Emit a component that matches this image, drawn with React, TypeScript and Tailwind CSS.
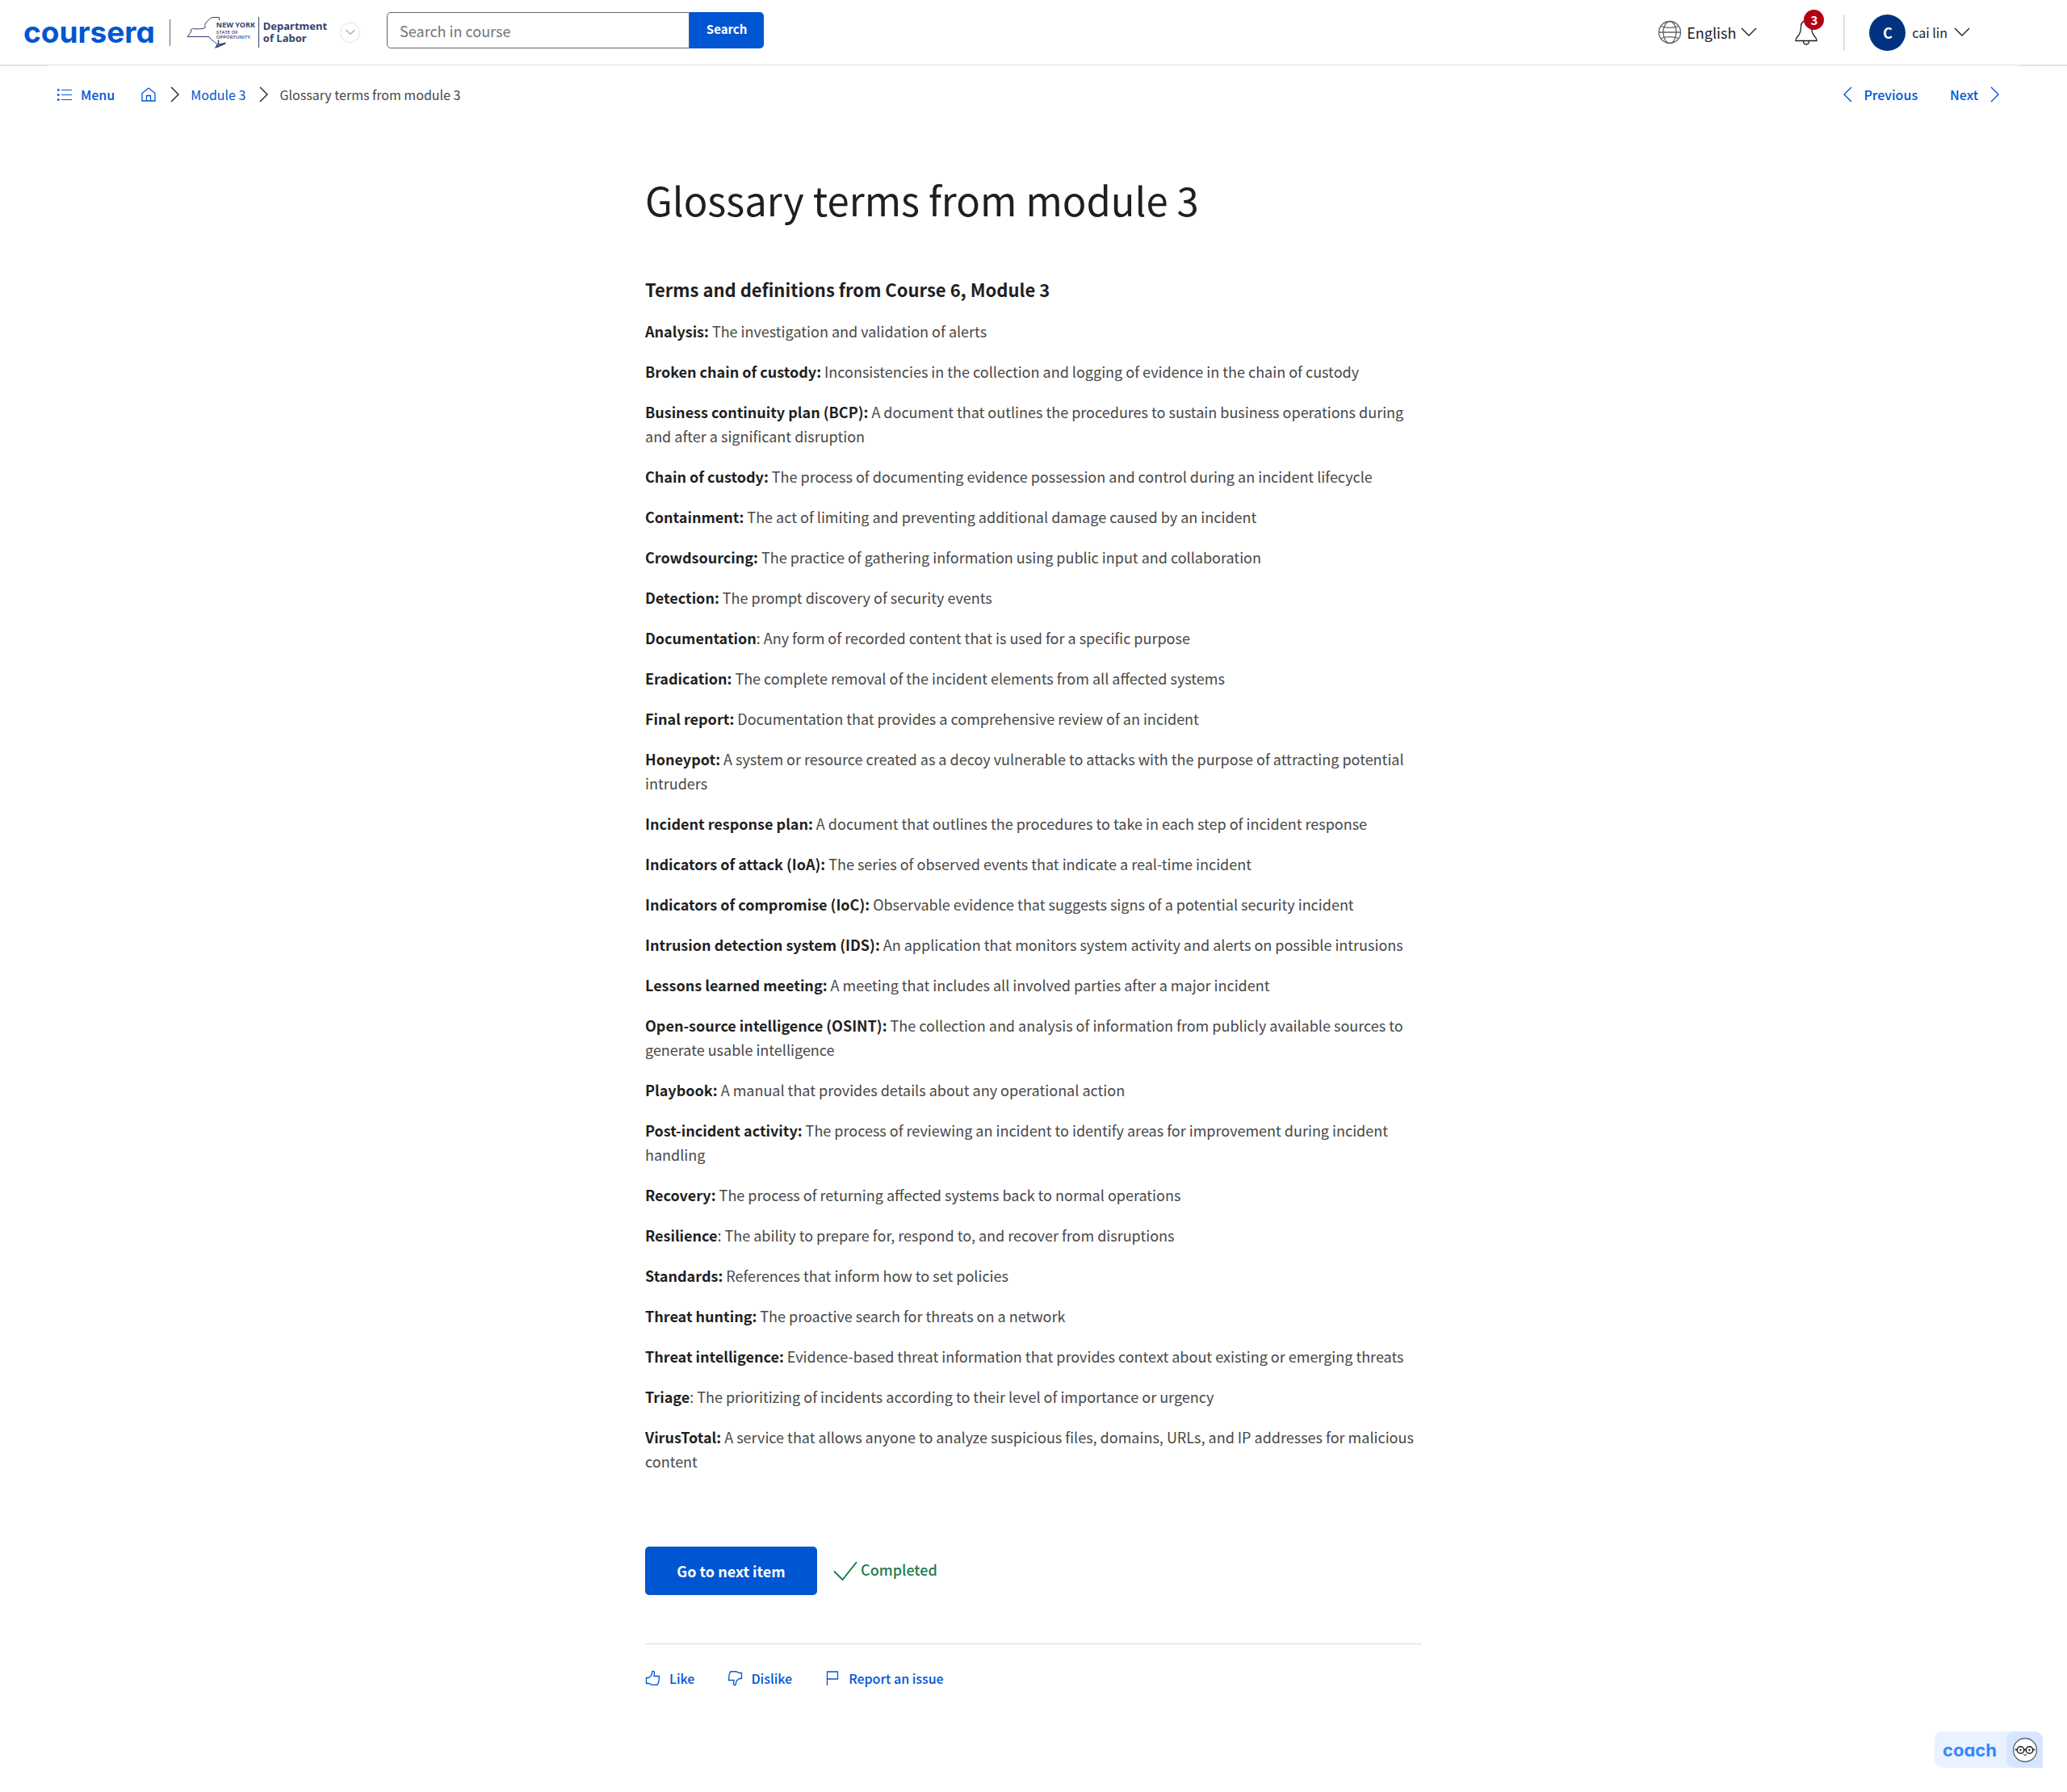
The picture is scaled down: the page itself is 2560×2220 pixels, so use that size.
import React from "react";

type Term = { term: string; text: string; plainColon?: boolean };

const terms: Term[] = [
  { term: "Analysis", text: "The investigation and validation of alerts" },
  { term: "Broken chain of custody", text: "Inconsistencies in the collection and logging of evidence in the chain of custody" },
  { term: "Business continuity plan (BCP)", text: "A document that outlines the procedures to sustain business operations during and after a significant disruption" },
  { term: "Chain of custody", text: "The process of documenting evidence possession and control during an incident lifecycle" },
  { term: "Containment", text: "The act of limiting and preventing additional damage caused by an incident" },
  { term: "Crowdsourcing", text: "The practice of gathering information using public input and collaboration" },
  { term: "Detection", text: "The prompt discovery of security events" },
  { term: "Documentation", text: "Any form of recorded content that is used for a specific purpose", plainColon: true },
  { term: "Eradication", text: "The complete removal of the incident elements from all affected systems" },
  { term: "Final report", text: "Documentation that provides a comprehensive review of an incident" },
  { term: "Honeypot", text: "A system or resource created as a decoy vulnerable to attacks with the purpose of attracting potential intruders" },
  { term: "Incident response plan", text: "A document that outlines the procedures to take in each step of incident response" },
  { term: "Indicators of attack (IoA)", text: "The series of observed events that indicate a real-time incident" },
  { term: "Indicators of compromise (IoC)", text: "Observable evidence that suggests signs of a potential security incident" },
  { term: "Intrusion detection system (IDS)", text: "An application that monitors system activity and alerts on possible intrusions" },
  { term: "Lessons learned meeting", text: "A meeting that includes all involved parties after a major incident" },
  { term: "Open-source intelligence (OSINT)", text: "The collection and analysis of information from publicly available sources to generate usable intelligence" },
  { term: "Playbook", text: "A manual that provides details about any operational action" },
  { term: "Post-incident activity", text: "The process of reviewing an incident to identify areas for improvement during incident handling" },
  { term: "Recovery", text: "The process of returning affected systems back to normal operations" },
  { term: "Resilience", text: "The ability to prepare for, respond to, and recover from disruptions", plainColon: true },
  { term: "Standards", text: "References that inform how to set policies" },
  { term: "Threat hunting", text: "The proactive search for threats on a network" },
  { term: "Threat intelligence", text: "Evidence-based threat information that provides context about existing or emerging threats" },
  { term: "Triage", text: "The prioritizing of incidents according to their level of importance or urgency", plainColon: true },
  { term: "VirusTotal", text: "A service that allows anyone to analyze suspicious files, domains, URLs, and IP addresses for malicious content" },
];

function Chevron({ dir, className }: { dir: "down" | "left" | "right"; className?: string }) {
  const d = { down: "M1 5 L10 14 L19 5", left: "M14 1 L5 10 L14 19", right: "M6 1 L15 10 L6 19" }[dir];
  return (
    <svg viewBox="0 0 20 20" fill="none" stroke="currentColor" strokeWidth="1.4" className={className} aria-hidden="true">
      <path d={d} />
    </svg>
  );
}

function NyLogo() {
  return (
    <a href="#ny" aria-label="New York State Department of Labor" className="flex h-10 items-center text-[#34426e]">
      <span className="relative flex h-10 w-[89px] items-start">
        <svg viewBox="0 0 89 40" className="absolute inset-0 h-10 w-[89px]" fill="none" stroke="currentColor" strokeWidth="1" aria-hidden="true">
          <path d="M40.500 5V1.500H32l-3.500 2-4.500 4.500-1.500 3.500 1 2.500-3.500 1.500-7 .5-5.500-.5L5 17l1 2-5 6.500h27l3 4 2.500 1.500 4.500 4" />
          <path d="M39.500 29.500V35l-3 3.500 2-.500 10-4.500-5.500 1-4 .500-2 2.500" strokeWidth="1.500" />
        </svg>
        <span className="relative ml-[37px] mt-[5px] flex flex-col whitespace-nowrap font-['Open_Sans',sans-serif] font-bold">
          <span className="text-[9px] leading-[12px]">NEW YORK</span>
          <span className="text-[6px] font-semibold leading-[6px]">STATE OF</span>
          <span className="text-[6px] font-semibold leading-[6px]">OPPORTUNITY.</span>
        </span>
      </span>
      <span className="h-[38px] w-px bg-[#34426e]" />
      <span className="ml-[5px] font-['Noto_Sans',sans-serif] text-[13px] font-bold leading-[15px]">
        Department
        <br />
        of Labor
      </span>
    </a>
  );
}

function Header() {
  return (
    <header className="flex h-[81px] items-center border-b border-[#e1e1e1] pl-[29px] pr-[120px]">
      <a href="#home" className="font-['Inter',sans-serif] text-[37px] font-bold leading-[40px] text-[#0056d2] [font-feature-settings:'cv11']">
        coursera
      </a>
      <span className="ml-[18px] h-[33px] w-px bg-[#636363]" />
      <div className="ml-5">
        <NyLogo />
      </div>
      <button aria-label="Switch program" className="ml-4 flex size-[25px] items-center justify-center rounded-full border border-[#e1e1e1] text-[#0056d2]">
        <Chevron dir="down" className="size-3" />
      </button>
      <form className="mb-[5px] ml-[33px] flex h-[45px]" onSubmit={(e) => e.preventDefault()}>
        <input
          type="text"
          aria-label="Search in course"
          placeholder="Search in course"
          className="w-[375px] rounded-l-[5px] border border-[#636363] px-[15px] text-[18px] leading-[30px] placeholder:text-[#757575]"
        />
        <button className="w-[92px] rounded-r-[5px] bg-[#0056d2] pb-0.5 text-[15px] font-bold text-white">Search</button>
      </form>
      <div className="ml-auto flex items-center text-[#1f1f1f]">
        <button className="flex items-center text-[18px] leading-[30px]">
          <svg viewBox="0 0 30 30" className="mr-1.5 size-[30px]" fill="none" stroke="#636363" strokeWidth="1.3" aria-hidden="true">
            <circle cx="15" cy="15" r="13.500" />
            <ellipse cx="15" cy="15" rx="8" ry="13.500" />
            <path d="M1.500 15h27M4 7.500c6 2.500 16 2.500 22 0M4 22.500c6-2.500 16-2.500 22 0" />
          </svg>
          English
          <Chevron dir="down" className="ml-1.5 size-5" />
        </button>
        <button aria-label="Notifications" className="relative ml-[47px]">
          <svg viewBox="0 0 28 32" className="h-8 w-7" fill="none" stroke="#1f1f1f" strokeWidth="1.3" aria-hidden="true">
            <path d="M14 1.500C9 2 7.500 6 7.500 9c0 5-.500 8.500-4 12-1.500 1.500-2.500 3.500-2.500 5.500h26c0-2-1-4-2.500-5.500-3.500-3.500-4-7-4-12 0-3-1.500-7-6.500-7.500z" />
            <path d="M10.500 26.500c0 6 7 6 7 0" />
          </svg>
          <span className="absolute -right-2 -top-3 flex size-[25px] items-center justify-center rounded-full bg-[#b30013] text-[15px] font-bold leading-none text-white">3</span>
        </button>
        <span className="ml-8 h-[45px] w-0.5 bg-[#e1e1e1]" />
        <button className="ml-[30px] flex items-center text-[16px]">
          <span className="flex size-[45px] items-center justify-center rounded-full bg-[#00327f] text-[18px] font-bold leading-none text-white">C</span>
          <span className="ml-2">cai lin</span>
          <Chevron dir="down" className="ml-2 size-5" />
        </button>
      </div>
    </header>
  );
}

function SubNav() {
  return (
    <div className="border-t border-[#e1e1e1]">
      <nav className="relative mx-[60px] -mt-px flex h-[72px] items-center bg-white pl-[10px] pr-5 text-[16px] font-medium leading-[24px] text-[#0056d2]">
        <button className="flex items-center gap-2.5 font-medium">
          <svg viewBox="0 0 20 20" className="size-5" fill="none" stroke="currentColor" strokeWidth="1.2" aria-hidden="true">
            <path d="M6 4.500h13M6 10.500h13M6 16.500h13" />
            <path d="M1 4.500h2.500M1 10.500h2.500M1 16.500h2.500" strokeWidth="2.400" />
          </svg>
          Menu
        </button>
        <ol className="ml-8 flex items-center gap-3 font-normal">
          <li>
            <a href="#course" aria-label="Course home">
              <svg viewBox="0 0 20 20" className="size-5" fill="none" stroke="currentColor" strokeWidth="1.300" aria-hidden="true">
                <path d="M2 8.500 10 2l8 6.500V18H2zM7.500 18v-6.500h5V18" />
              </svg>
            </a>
          </li>
          <li className="flex items-center gap-2.5">
            <Chevron dir="right" className="size-5 text-[#1f1f1f]" />
            <a href="#module-3">Module 3</a>
          </li>
          <li className="flex items-center gap-2.5 text-[#454749]">
            <Chevron dir="right" className="size-5 text-[#1f1f1f]" />
            Glossary terms from module 3
          </li>
        </ol>
        <a href="#previous" className="ml-auto flex items-center gap-2.5">
          <Chevron dir="left" className="size-5" />
          Previous
        </a>
        <a href="#next" className="ml-10 flex items-center gap-2.5">
          Next
          <Chevron dir="right" className="size-5" />
        </a>
      </nav>
    </div>
  );
}

const thumb = "M1.500 9.500h3L8 6.500l1-5c2-.500 2.500.500 2.500 2L11 7.500h6.500l-.500 6-1.500 4.500-7 .300-4-1.800h-3z";

function Feedback() {
  return (
    <div className="flex items-center gap-10 border-t border-[#dadada] pt-[30px] text-[16px] font-medium leading-[24px] text-[#0056d2]">
      <button className="flex items-center gap-2.5">
        <svg viewBox="0 0 20 20" className="size-5" fill="none" stroke="currentColor" strokeWidth="1.300" aria-hidden="true"><path d={thumb} /></svg>
        Like
      </button>
      <button className="flex items-center gap-2.5">
        <svg viewBox="0 0 20 20" className="size-5 rotate-180" fill="none" stroke="currentColor" strokeWidth="1.300" aria-hidden="true"><path d={thumb} /></svg>
        Dislike
      </button>
      <button className="flex items-center gap-2.5">
        <svg viewBox="0 0 20 20" className="size-5" fill="none" stroke="currentColor" strokeWidth="1.300" aria-hidden="true"><path d="M3.500 19V2h13v9h-13" /></svg>
        Report an issue
      </button>
    </div>
  );
}

function Coach() {
  return (
    <button className="fixed bottom-[30px] right-[30px] flex h-[45px] items-stretch rounded-[10px] rounded-br-none bg-[#eaf2ff]">
      <span className="self-center pl-2.5 pr-3 font-['Inter',sans-serif] text-[22px] font-bold leading-[30px] text-[#3587fc] [font-feature-settings:'cv11']">coach</span>
      <span className="flex w-[45px] items-center justify-center rounded-[10px] rounded-br-none bg-[#d6e6ff]">
        <svg viewBox="0 0 32 32" className="size-8" fill="none" stroke="#1f1f1f" aria-hidden="true">
          <circle cx="16" cy="16" r="14.500" fill="#fff" stroke="#5b6478" strokeWidth="1.300" />
          <circle cx="10.500" cy="16" r="4.300" strokeWidth="1.500" />
          <circle cx="21.500" cy="16" r="4.300" strokeWidth="1.500" />
          <path d="M15 15.500h2M3.500 15.500h2.500M26 15.500h2.500" strokeWidth="1.500" />
          <path d="M14 21.500q2 1.800 4 0" />
          <circle cx="10.500" cy="16" r=".8" fill="#1f1f1f" />
          <circle cx="21.500" cy="16" r=".8" fill="#1f1f1f" />
        </svg>
      </span>
    </button>
  );
}

export default function App() {
  return (
    <div className="min-h-screen bg-white font-['Noto_Sans_CJK_SC',sans-serif] text-[#1f1f1f]">
      <Header />
      <SubNav />
      <main className="mx-auto w-full max-w-[962px] pb-[120px] pt-[59px]">
        <h1 className="text-[49px] leading-[70px]">Glossary terms from module 3</h1>
        <h2 className="mt-[60px] text-[22px] font-bold leading-[32px]">Terms and definitions from Course 6, Module 3</h2>
        <div className="mt-[21px] flex flex-col gap-5 text-[18px] leading-[30px]">
          {terms.map((t) => (
            <p key={t.term} className="text-[#484848]">
              <strong className="font-bold text-[#1f1f1f]">{t.plainColon ? t.term : `${t.term}:`}</strong>
              {`${t.plainColon ? ":" : ""} ${t.text}`}
            </p>
          ))}
        </div>
        <div className="mb-[60px] mt-[91px] flex items-center">
          <button className="h-[60px] w-[213px] rounded-[5px] bg-[#0056d2] text-[18px] font-bold text-white">Go to next item</button>
          <span className="ml-5 flex items-center gap-1 text-[18px] font-medium leading-[30px] text-[#1d7c50]">
            <svg viewBox="0 0 30 30" className="size-[30px]" fill="none" stroke="currentColor" strokeWidth="2" aria-hidden="true">
              <path d="M1 15.500 11.500 26 29 4" />
            </svg>
            <span className="pb-1">Completed</span>
          </span>
        </div>
        <Feedback />
      </main>
      <Coach />
    </div>
  );
}
